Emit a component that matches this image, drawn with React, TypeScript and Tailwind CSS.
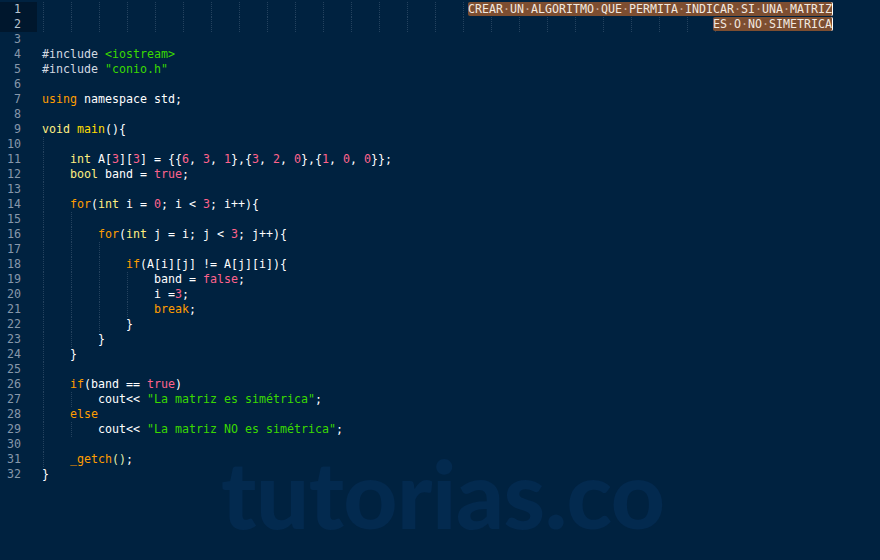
type Tok = [string, string];

const W = "text-[#ffffff]";
const K = "text-[#ff9d00]";
const T = "text-[#ffee80]";
const F = "text-[#ffdd00]";
const N = "text-[#ff628c]";
const S = "text-[#3ad900]";
const P = "text-[#d3d9e0]";
const B = "text-[#e1efb0]";

type Line = { toks: Tok[]; guides: number };

const lines: Line[] = [
  { toks: [], guides: 16 },
  { toks: [], guides: 25 },
  { toks: [], guides: 0 },
  { toks: [["#include ", P], ["<iostream>", S]], guides: 0 },
  { toks: [["#include ", P], ['"conio.h"', S]], guides: 0 },
  { toks: [], guides: 0 },
  { toks: [["using", K], [" namespace std;", W]], guides: 0 },
  { toks: [], guides: 0 },
  { toks: [["void ", T], ["main", F], ["(){", W]], guides: 0 },
  { toks: [], guides: 1 },
  {
    toks: [
      ["    ", W], ["int", T], [" A[", W], ["3", N], ["][", W], ["3", N], ["] = {{", W],
      ["6", N], [", ", W], ["3", N], [", ", W], ["1", N], ["},{", W],
      ["3", N], [", ", W], ["2", N], [", ", W], ["0", N], ["},{", W],
      ["1", N], [", ", W], ["0", N], [", ", W], ["0", N], ["}};", W],
    ],
    guides: 1,
  },
  { toks: [["    ", W], ["bool", T], [" band = ", W], ["true", N], [";", W]], guides: 1 },
  { toks: [], guides: 1 },
  {
    toks: [["    ", W], ["for", K], ["(", W], ["int", T], [" i = ", W], ["0", N], ["; i < ", W], ["3", N], ["; i++){", W]],
    guides: 1,
  },
  { toks: [], guides: 2 },
  {
    toks: [["        ", W], ["for", K], ["(", W], ["int", T], [" j = i; j < ", W], ["3", N], ["; j++){", W]],
    guides: 2,
  },
  { toks: [], guides: 3 },
  { toks: [["            ", W], ["if", K], ["(A[i][j] != A[j][i]){", W]], guides: 3 },
  { toks: [["                band = ", W], ["false", N], [";", W]], guides: 4 },
  { toks: [["                i =", W], ["3", N], [";", W]], guides: 4 },
  { toks: [["                ", W], ["break", K], [";", W]], guides: 4 },
  { toks: [["            }", W]], guides: 3 },
  { toks: [["        }", W]], guides: 2 },
  { toks: [["    }", W]], guides: 1 },
  { toks: [], guides: 1 },
  { toks: [["    ", W], ["if", K], ["(band == ", W], ["true", N], [")", W]], guides: 1 },
  { toks: [["        cout<< ", W], ['"La matriz es simétrica"', S], [";", W]], guides: 2 },
  { toks: [["    ", W], ["else", K]], guides: 1 },
  { toks: [["        cout<< ", W], ['"La matriz NO es simétrica"', S], [";", W]], guides: 2 },
  { toks: [], guides: 1 },
  { toks: [["    ", W], ["_getch", K], ["()", B], [";", W]], guides: 1 },
  { toks: [["}", W]], guides: 0 },
];

function Selected({ text }: { text: string }) {
  const words = text.split(" ");
  return (
    <span className="bg-[#7d4e31] text-[#f2e9e0] rounded-[2px] border-r border-white">
      {words.map((w, i) => (
        <span key={i}>
          {i > 0 && <span className="text-[#c9ad98]">·</span>}
          {w}
        </span>
      ))}
    </span>
  );
}

export default function App() {
  return (
    <div
      className="relative w-[880px] h-[560px] overflow-hidden bg-[#002240] pt-[2px]"
      style={{ fontFamily: '"DejaVu Sans Mono", "Liberation Mono", monospace' }}
    >
      {/* watermark */}
      <div
        className="absolute left-[221px] top-[446px] text-[94px] font-black tracking-[-0.5px] text-[#032a4f] leading-none select-none"
        style={{ fontFamily: "Lato, sans-serif" }}
      >
        tutorias.co
      </div>

      <div className="relative">
        {lines.map((ln, idx) => {
          const n = idx + 1;
          const current = n <= 2;
          return (
            <div key={n} className="flex h-[15px] text-[11.63px] leading-[15px]">
              <div
                className={
                  current
                    ? "w-[37px] pr-[16px] text-right bg-[#00172d] text-[#b9c4d0]"
                    : "w-[37px] pr-[16px] text-right text-[#8797aa]"
                }
              >
                {n}
              </div>
              <div className="relative flex-1 pl-[5px] whitespace-pre">
                {Array.from({ length: ln.guides }).map((_, k) => (
                  <span
                    key={k}
                    className="absolute top-0 h-[15px] border-l border-dotted border-[#24425e]"
                    style={{ left: 6 + k * 28 }}
                  />
                ))}
                {n === 1 && (
                  <span className="relative ml-[426px]">
                    <Selected text="CREAR UN ALGORITMO QUE PERMITA INDICAR SI UNA MATRIZ" />
                  </span>
                )}
                {n === 2 && (
                  <span className="relative ml-[671px]">
                    <Selected text="ES O NO SIMETRICA" />
                  </span>
                )}
                {ln.toks.map(([t, c], i) => (
                  <span key={i} className={`relative ${c}`}>
                    {t}
                  </span>
                ))}
              </div>
            </div>
          );
        })}
      </div>
    </div>
  );
}
